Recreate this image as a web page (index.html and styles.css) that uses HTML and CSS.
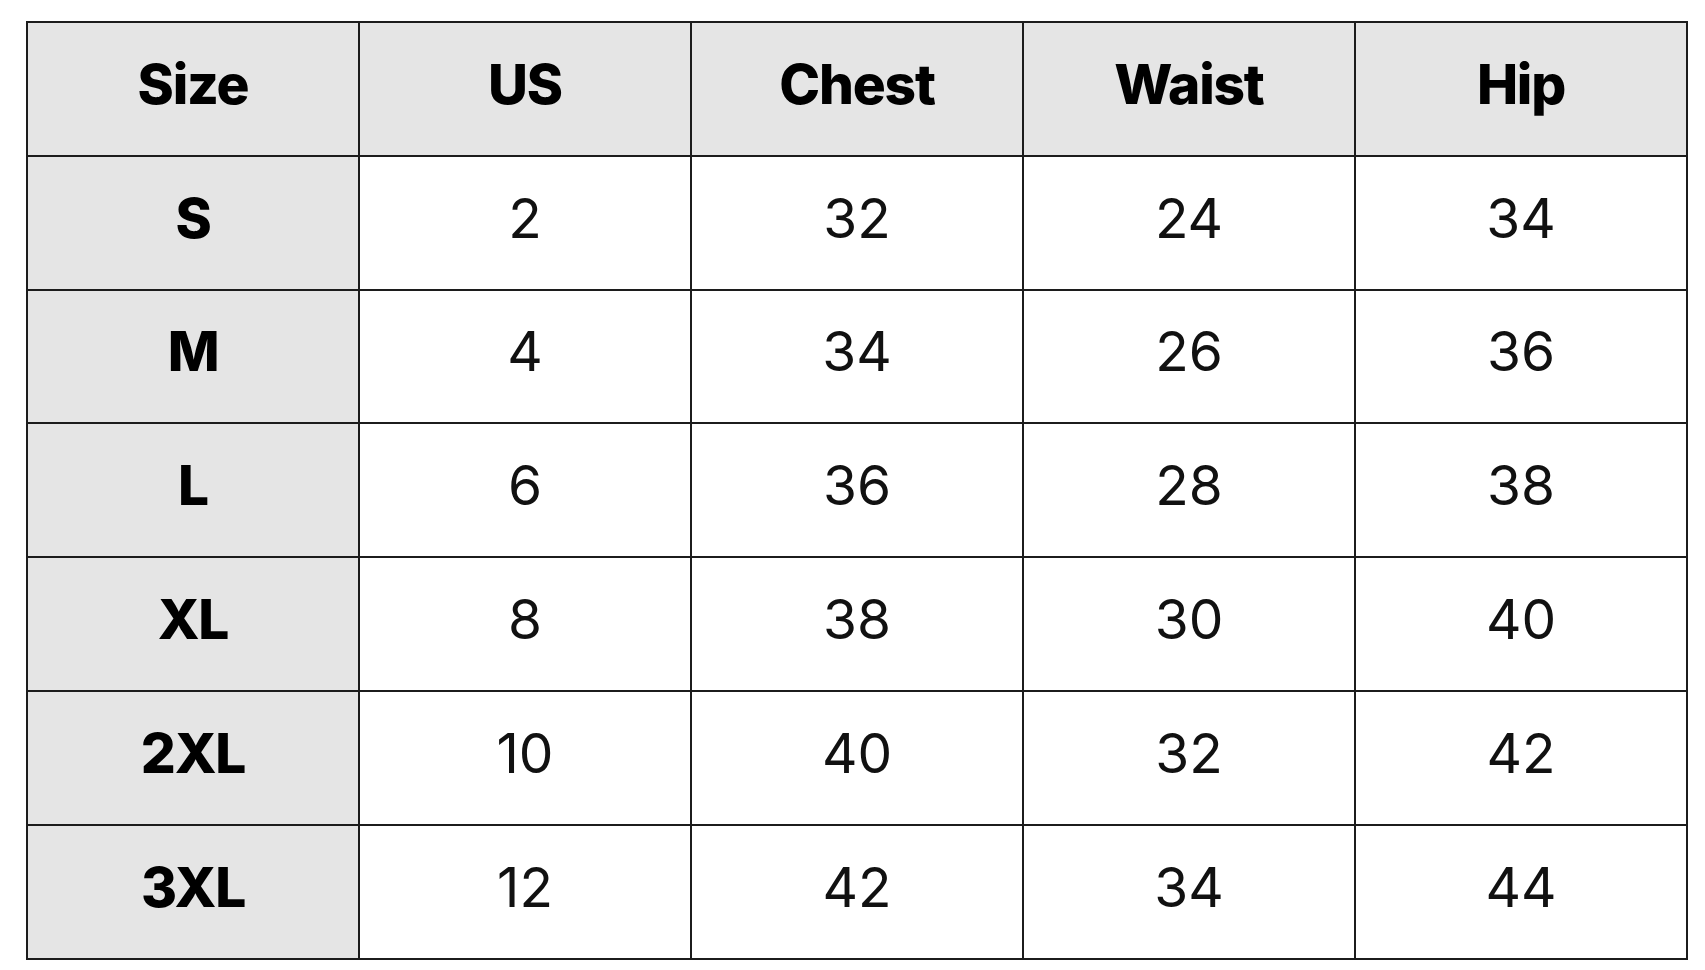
FILE: index.html
```html
<!DOCTYPE html>
<html>
<head>
<meta charset="utf-8">
<link rel="stylesheet" href="styles.css">
</head>
<body>
<div class="chart">
  <div class="cell head">Size</div><div class="cell head">US</div><div class="cell head">Chest</div><div class="cell head">Waist</div><div class="cell head">Hip</div>
  <div class="cell label">S</div><div class="cell">2</div><div class="cell">32</div><div class="cell">24</div><div class="cell">34</div>
  <div class="cell label">M</div><div class="cell">4</div><div class="cell">34</div><div class="cell">26</div><div class="cell">36</div>
  <div class="cell label">L</div><div class="cell">6</div><div class="cell">36</div><div class="cell">28</div><div class="cell">38</div>
  <div class="cell label">XL</div><div class="cell">8</div><div class="cell">38</div><div class="cell">30</div><div class="cell">40</div>
  <div class="cell label">2XL</div><div class="cell">10</div><div class="cell">40</div><div class="cell">32</div><div class="cell">42</div>
  <div class="cell label">3XL</div><div class="cell">12</div><div class="cell">42</div><div class="cell">34</div><div class="cell">44</div>
</div>
</body>
</html>
```
FILE: styles.css
```css
html, body {
  margin: 0;
  padding: 0;
  background: #ffffff;
}
body {
  padding: 21px 0 0 26px;
  font-family: "Inter", "Open Sans", sans-serif;
}
.chart {
  display: grid;
  grid-template-columns: repeat(5, 332px);
  grid-template-rows: repeat(7, 133.8px);
  width: max-content;
  border-top: 2px solid #1c1c1c;
  border-left: 2px solid #1c1c1c;
}
.cell {
  box-sizing: border-box;
  border-right: 2px solid #1c1c1c;
  border-bottom: 2px solid #1c1c1c;
  display: flex;
  align-items: center;
  justify-content: center;
  padding-bottom: 10px;
  font-size: 55px;
  font-weight: 400;
  color: #111111;
  background: #ffffff;
}
.head, .label {
  background: #e5e5e5;
  font-weight: 800;
  letter-spacing: -1.2px;
  color: #000000;
}
```
